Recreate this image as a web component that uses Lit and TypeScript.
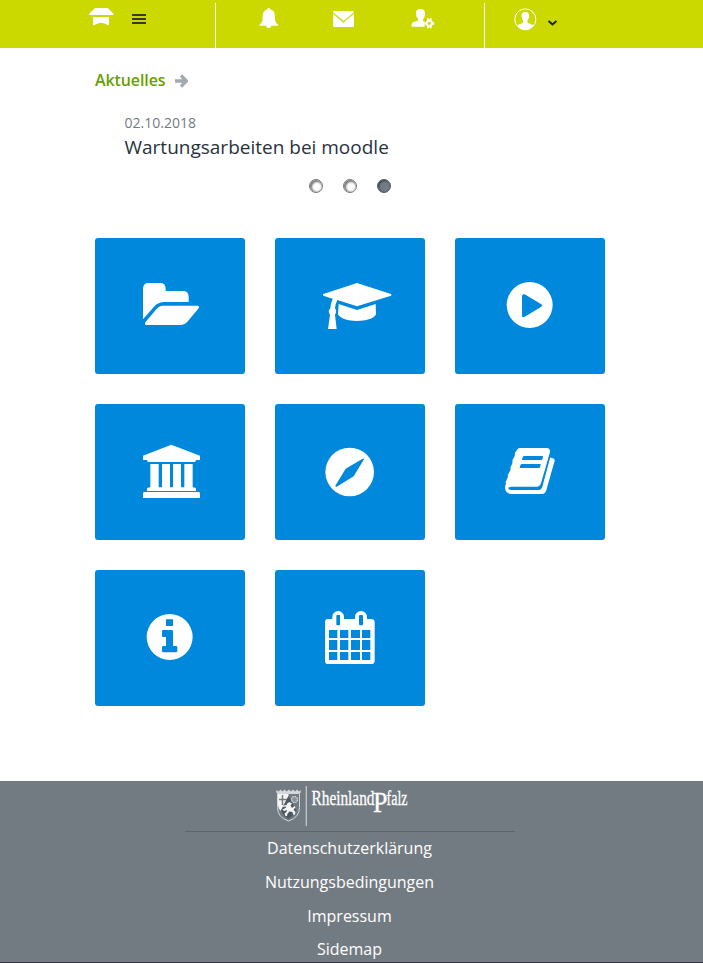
import { LitElement, html, svg, css } from "lit";
import { customElement } from "lit/decorators.js";

// Every tile glyph is drawn on a 450 x 408 grid, three units to a pixel.
const tiles = [
  { name: "Dateien", box: "15 24 450 408", art: svg`
    <path d="M159 268V176q0-17 17-17h34q17 0 17 17v7h52q17 0 17 17v16h-72q-20 0-32 14z"/>
    <path d="M218 227h104q8 0 4 8l-32 38q-9 12-24 12H170q-8 0-4-8l33-39q9-11 19-11z"/>` },
  { name: "Kurse", box: "555 24 450 408", art: svg`
    <path d="M801 159l102 33q3 3 0 5l-102 32-59-19q-6 12-7 25 7 9 0 19l5 43h-26l6-43q-8-10 1-19 1-15 7-29l-28-9q-3-3 0-5z"/>
    <path d="M746 222l55 18 56-18 1 31c-7 14-31 20-57 20s-51-7-57-20z"/>` },
  { name: "Medien", box: "15 24 450 408", art: svg`
    <path fill-rule="evenodd" d="M239 156a69 69 0 1 1 0 138a69 69 0 1 1 0-138zM216 197v60q1 6 7 4l51-31q4-4 0-7l-50-30q-6-2-8 4z"/>` },
  { name: "Schule", box: "15 12 450 408", art: svg`
    <path d="M244 134l86 33v13h-12q0 6-5 6H176q-5 0-5-6h-12v-13zM181 192h25v70h10v-70h24v70h9v-70h24v70h10v-70h25v70q10 0 10 5v6H171v-6q0-5 10-5zM163 276h163q4 0 4 5v13H159v-13q0-5 4-5z"/>` },
  { name: "Navigator", box: "555 12 450 408", art: svg`
    <path fill-rule="evenodd" d="M779 143a73 73 0 1 1 0 146a73 73 0 1 1 0-146zM818 176l-51 30-31 51q0 4 4 3l51-31 31-51q0-4-4-2z"/>` },
  { name: "Handbuch", box: "15 522 450 408", art: svg`
    <path fill-rule="evenodd" d="M212 654h77q12 0 11 12l-26 91q-4 13-12 13h-78q-9 0-9 5 0 5 9 5h80q10 0 13-10l23-85q1-5 5-1 9 1 9 8l-25 89q-3 11-13 11h-91q-20-1-20-20 0-5 3-11-3-4 1-9l4-10q2-3 0-6l7-13q3-6 1-10l6-13q1-6 0-9l6-11q3-6 1-10 4-5 8-12 2-4 10-4zM222 678q-4 0-6 12h58q4 0 5-12zM215 702q-4 0-6 12h58q4 0 5-12z"/>` },
  { name: "Informationen", box: "15 15 450 408", art: svg`
    <path fill-rule="evenodd" d="M239 147a69 69 0 1 1 0 138a69 69 0 1 1 0-138zM228 163v20h21v-20zM220 195q-4 0-4 4v14q0 3 4 3h8v27h-8q-4 0-4 4v11q0 4 4 4h38q4 0 4-4v-11q0-4-4-4h-9v-44q0-4-4-4z"/>` },
  { name: "Kalender", box: "555 15 450 408", art: svg`
    <path fill-rule="evenodd" d="M714 162h13v-7a17.500 17 0 0 1 35 0v7h33v-7a18 17 0 0 1 36 0v7h12q11 0 11 10v115q0 10-11 10H714q-9 0-9-10V172q0-10 9-10zM741 150q-2 0-2 2v26q0 3 2 3h7q2 0 2-3v-26q0-2-2-2zM810 150q-3 0-3 2v26q0 3 3 3h6q3 0 3-3v-26q0-2-3-2z
      M717 195v24h25v-24zM750 195v24h25v-24zM783 195v24h27v-24zM816 195v24h25v-24z
      M717 225v30h25v-30zM750 225v30h25v-30zM783 225v30h27v-30zM816 225v30h25v-30z
      M717 261v24h25v-24zM750 261v24h25v-24zM783 261v24h27v-24zM816 261v24h25v-24z"/>` },
];

@customElement("icon-tile")
class IconTile extends LitElement {
  static properties = { tile: { attribute: false } };
  declare tile: (typeof tiles)[number];
  static styles = css`
    :host { display: flex; height: 136px; background: #0088dd; border-radius: 3px; overflow: hidden; }
    svg { width: 150px; height: 136px; fill: #fff; }
  `;
  render() {
    return html`<svg viewBox=${this.tile.box} role="img" aria-label=${this.tile.name}>${this.tile.art}</svg>`;
  }
}

@customElement("top-bar")
class TopBar extends LitElement {
  static styles = css`
    :host { display: flex; height: 48px; background: #ccd900; box-sizing: border-box; padding-top: 3px; }
    svg { display: block; flex: none; fill: #fff; }
    .group { display: flex; align-items: flex-start; box-sizing: border-box; }
    .brand { width: 215px; padding-left: 89px; gap: 18px; }
    .tools { width: 269px; border-left: 1px solid #fff; padding-left: 43px; }
    .user { flex: 1; border-left: 1px solid #fff; padding-left: 29px; gap: 10px; }
    .logo { margin-top: 5px; }
    .menu { margin-top: 11px; fill: #333a33; }
    .bell { margin-top: 5px; }
    .mail { margin: 8px 0 0 55px; }
    .gear { margin: 5px 0 0 57px; }
    .avatar { margin-top: 5px; }
    .chevron { margin-top: 16px; }
  `;
  render() {
    return html`
      <div class="group brand">
        <svg class="logo" width="25" height="18" viewBox="57 24 75 54"><path d="M76 24h36q2 0 4 3l15 15v3H57v-3l15-15q2-3 4-3zM69 51h48v25h-3q-20-16-42 0h-3z"/></svg>
        <svg class="menu" width="14" height="10" viewBox="0 0 14 10"><path d="M0 0h14v2H0zM0 4h14v2H0zM0 8h14v2H0z"/></svg>
      </div>
      <div class="group tools">
        <svg class="bell" width="19" height="21" viewBox="57 24 57 63"><path d="M86 24q4 0 4 4c12 3 15 12 15 23 0 14 2 18 9 22q1 2-1 4H94q-1 7-8 7t-8-7H60q-2-2-1-4c7-4 9-9 9-22 0-11 3-20 15-23q-1-4 3-4z"/></svg>
        <svg class="mail" width="21" height="17" viewBox="279 33 63 51"><path d="M283 33h55q3 0 4 4L311 63 279 37q1-4 4-4zM279 41l31 27 32-27v36q0 4-4 4h-55q-4 0-4-4z"/></svg>
        <svg class="gear" width="24" height="21" viewBox="513 24 72 63">
          <path d="M542 27c11 0 14 8 13 17-1 7-3 11-6 13v5q3 3 5 4-3 5 0 10v4H515q-1-12 5-14 14-3 15-5v-4c-4-3-6-9-7-15-1-9 3-15 14-15z"/>
          <circle cx="568" cy="70" r="8" fill="none" stroke="#fff" stroke-width="6"/>
          <path d="M561 55h5l2 5 2-5h5v9h-14zM561 85h5l2-5 2 5h5v-9h-14zM553 67h7v7h-7zM576 67h7v7h-7z"/>
        </svg>
      </div>
      <div class="group user">
        <svg class="avatar" width="23" height="23" viewBox="131 26 69 69">
          <circle cx="165" cy="60" r="31.500" fill="none" stroke="#fff" stroke-width="3"/>
          <path d="M165 38c9 0 12 6 11 15-1 6-3 9-5 11 0 6 2 7 7 9 6 1 9 3 11 6q-9 12-24 12t-24-12c2-4 6-5 11-6 5-2 7-3 7-9-2-2-4-5-5-11-1-9 2-15 11-15z"/>
        </svg>
        <svg class="chevron" width="11" height="8" viewBox="0 0 11 8"><path d="M1.500 2l4 3.500 4-3.500" fill="none" stroke="#20250f" stroke-width="2"/></svg>
      </div>`;
  }
}

@customElement("page-footer")
class PageFooter extends LitElement {
  static styles = css`
    :host { display: flex; flex-direction: column; align-items: center; box-sizing: border-box; height: 182px; background: #737b82; border-bottom: 1px solid #3c3040; overflow: hidden; }
    .brand { width: 330px; height: 51px; box-sizing: border-box; border-bottom: 1px solid #5d646e; margin-right: 3px; flex: none; }
    .brand svg { display: block; margin: 0 0 0 80px; }
    nav { display: flex; flex-direction: column; align-items: center; margin-right: 4px; }
    a { color: #fff; font: 16px/33.800px "Open Sans", sans-serif; white-space: nowrap; }
    .word { font: 20px "Liberation Serif", serif; fill: #fff; stroke: #fff; stroke-width: 0.3px; }
    .initial { font-size: 30px; }
  `;
  render() {
    return html`
      <div class="brand">
        <svg width="150" height="49" viewBox="0 0 150 49" aria-label="RheinlandPfalz">
          <path d="M11.500 12l-.500-3 2.500 1.500 2-2 2 2 2-2 2 2 2.500-2 2 2 2-2 2 2 2-2 2 2 2-1.500-.500 3z" fill="#d5d8da"/>
          <path d="M12.500 12.500h22v14q0 10-11 13.500-11-3.500-11-13.500z" fill="#737b82" stroke="#d3d6d8" stroke-width="1"/>
          <path d="M13 13h10.500v2l-8 15q-2.500-3-2.500-6z" fill="#f4f5f5"/>
          <path d="M17.500 14v10M14 18.500h8" stroke="#737b82" stroke-width="1.500"/>
          <circle cx="29.500" cy="18.500" r="3" fill="#8a9197" stroke="#dde0e2" stroke-width="1.200" stroke-dasharray="1.500 .8"/>
          <path d="M23.500 15l-7.500 15q2.500 5 7.500 8 5-3 8-8z" fill="#4e575e"/>
          <path d="M22 22.500l2.500-1.500 2.500 1.500-1.500 2 1.500 2.500 2.500-2 1 1.500-2 2 2 2.500-1 3-1.500-.5-.5-2.500-3-.5-2 2-.5 2.500h-1.500l-1-2.500 2-1.500.5-2-3 1-1.500-1.500 3-1.500 1-1.500-3.500.500.500-1.500 3-.5z" fill="#f4f5f5"/>
          <path d="M41.300 5v40" stroke="#c3c7ca" stroke-width="1.300"/>
          <text class="word" y="24.300"><tspan x="46.500" textLength="63" lengthAdjust="spacingAndGlyphs">Rheinland</tspan><tspan class="initial" x="108" y="30.800" textLength="14.500" lengthAdjust="spacingAndGlyphs">P</tspan><tspan x="121.500" y="24.300" textLength="21" lengthAdjust="spacingAndGlyphs">falz</tspan></text>
        </svg>
      </div>
      <nav><a>Datenschutzerklärung</a><a>Nutzungsbedingungen</a><a>Impressum</a><a>Sidemap</a></nav>`;
  }
}

@customElement("app-root")
class AppRoot extends LitElement {
  static styles = css`
    :host { display: flex; flex-direction: column; height: 963px; overflow: hidden; background: #fff; font-family: "Open Sans", sans-serif; }
    main { width: 510px; margin-left: 95px; flex: 1; }
    h2 { display: flex; align-items: center; gap: 10px; margin: 20px 0 0; font-size: 16px; line-height: 24px; font-weight: 600; color: #669f00; letter-spacing: -0.1px; }
    h2 svg { margin-top: 2px; }
    .news { padding: 20px 0 0 29.500px; }
    .date { display: block; font-size: 14px; line-height: 22px; color: #737b82; }
    .title { display: block; font-size: 19px; line-height: 26px; color: #29323c; }
    .dots { display: flex; gap: 20px; margin: 19px 0 0 214px; }
    .dot { width: 14px; height: 14px; box-sizing: border-box; border-radius: 50%; border: 1px solid #777; background: #fff; box-shadow: inset 1px 1px 2px 1px #777; }
    .dot.on { background: #737b82; border-color: #555c62; box-shadow: inset 1px 1px 2px 0 #3b434a; }
    .grid { display: grid; grid-template-columns: repeat(3, 150px); gap: 30px; margin-top: 45px; }
  `;
  render() {
    return html`
      <top-bar></top-bar>
      <main>
        <h2><span>Aktuelles</span><svg width="13" height="14" viewBox="0 0 13 14"><path d="M0 7h10M6 1.500L11.500 7 6 12.500" fill="none" stroke="#a3a9ae" stroke-width="3.300"/></svg></h2>
        <div class="news"><span class="date">02.10.2018</span><span class="title">Wartungsarbeiten bei moodle</span></div>
        <div class="dots"><span class="dot"></span><span class="dot"></span><span class="dot on"></span></div>
        <div class="grid">${tiles.map((t) => html`<icon-tile .tile=${t}></icon-tile>`)}</div>
      </main>
      <page-footer></page-footer>`;
  }
}
